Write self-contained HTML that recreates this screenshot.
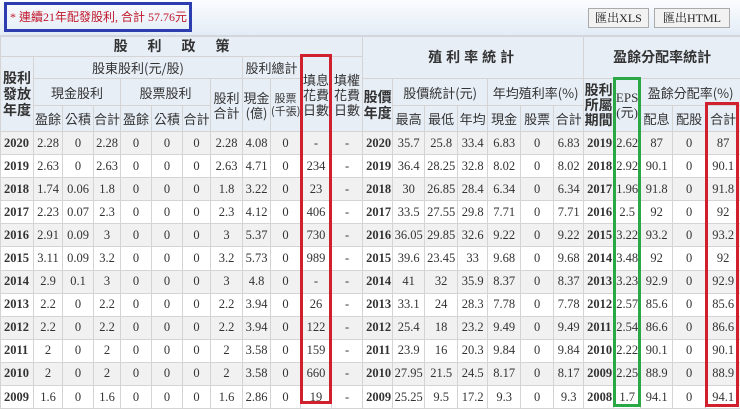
<!DOCTYPE html>
<html><head><meta charset="utf-8"><style>
*{margin:0;padding:0;box-sizing:border-box}
body{width:740px;height:408px;overflow:hidden;background:#fff;position:relative;font-family:"Liberation Serif","Noto Sans CJK TC",serif;color:#333}
.top{position:absolute;left:0;top:0;width:740px;height:36px;background:linear-gradient(#fbfdff,#e3ecf6);border-bottom:1px solid #cfd8e3}
.title{position:absolute;left:4px;top:2px;width:188px;height:30px;border:3px solid #2d3db0;color:#c0182b;font-size:12px;line-height:24px;padding-left:3px;font-family:"Liberation Serif","Noto Sans CJK TC",serif;white-space:nowrap;overflow:hidden}
.btn{position:absolute;top:8px;height:20px;background:#f2f2f2;border:1px solid #aaa;font-size:12px;line-height:18px;text-align:center;color:#222;font-family:"Liberation Serif","Noto Serif CJK SC",serif}
table{position:absolute;left:0;top:36px;width:740px;border-collapse:collapse;table-layout:fixed}
td,th{border:1px solid #d4d4d4;text-align:center;font-size:12.5px;padding:0;overflow:hidden;white-space:nowrap}
th{background:#e7eef6;font-weight:normal;font-family:"Noto Sans CJK TC",sans-serif;color:#333;font-size:13px;line-height:15px}
th.b{font-weight:bold;font-size:14px}
td.y{font-weight:bold;text-align:left;padding-left:3px}
tr.d{height:23.1px}
tr.d:nth-child(odd){background:#f1f1f1}
.box{position:absolute;border:3px solid}
</style></head><body>
<div class="top"></div>
<div class="title">* 連續21年配發股利, 合計 57.76元</div>
<div class="btn" style="left:588px;width:61px">匯出XLS</div>
<div class="btn" style="left:654px;width:76px">匯出HTML</div>
<table>
<colgroup>
<col style="width:33px"><col style="width:29px"><col style="width:31px"><col style="width:27px"><col style="width:31px"><col style="width:31px"><col style="width:28px"><col style="width:32px"><col style="width:28px"><col style="width:30px"><col style="width:31px"><col style="width:31px">
<col style="width:30px"><col style="width:32px"><col style="width:33px"><col style="width:30px"><col style="width:33px"><col style="width:33px"><col style="width:30px"><col style="width:30px"><col style="width:27px"><col style="width:32px"><col style="width:33px"><col style="width:35px">
</colgroup>
<tr style="height:20px"><th colspan="12" class="b" style="letter-spacing:20px">股利政策</th><th colspan="7" rowspan="2" class="b" style="letter-spacing:4px">殖利率統計</th><th colspan="5" rowspan="2" class="b">盈餘分配率統計</th></tr>
<tr style="height:22px"><th rowspan="3" class="b" style="line-height:16px">股利<br>發放<br>年度</th><th colspan="7">股東股利(元/股)</th><th colspan="2">股利總計</th><th rowspan="3">填息<br>花費<br>日數</th><th rowspan="3">填權<br>花費<br>日數</th></tr>
<tr style="height:27px"><th colspan="3">現金股利</th><th colspan="3">股票股利</th><th rowspan="2">股利<br>合計</th><th rowspan="2">現金<br>(億)</th><th rowspan="2" style="font-size:11px;line-height:13px">股票<br>(千張)</th>
<th rowspan="2" class="b" style="line-height:16px">股價<br>年度</th><th colspan="3">股價統計(元)</th><th colspan="3">年均殖利率(%)</th><th rowspan="2" class="b" style="line-height:15px">股利<br>所屬<br>期間</th><th rowspan="2" style="font-family:'Liberation Serif','Noto Sans CJK TC',serif">EPS<br>(元)</th><th colspan="3">盈餘分配率(%)</th></tr>
<tr style="height:26px"><th>盈餘</th><th>公積</th><th>合計</th><th>盈餘</th><th>公積</th><th>合計</th><th>最高</th><th>最低</th><th>年均</th><th>現金</th><th>股票</th><th>合計</th><th>配息</th><th>配股</th><th>合計</th></tr>
<tr class="d"><td class="y">2020</td><td>2.28</td><td>0</td><td>2.28</td><td>0</td><td>0</td><td>0</td><td>2.28</td><td>4.08</td><td>0</td><td>-</td><td>-</td><td class="y">2020</td><td>35.7</td><td>25.8</td><td>33.4</td><td>6.83</td><td>0</td><td>6.83</td><td class="y">2019</td><td>2.62</td><td>87</td><td>0</td><td>87</td></tr>
<tr class="d"><td class="y">2019</td><td>2.63</td><td>0</td><td>2.63</td><td>0</td><td>0</td><td>0</td><td>2.63</td><td>4.71</td><td>0</td><td>234</td><td>-</td><td class="y">2019</td><td>36.4</td><td>28.25</td><td>32.8</td><td>8.02</td><td>0</td><td>8.02</td><td class="y">2018</td><td>2.92</td><td>90.1</td><td>0</td><td>90.1</td></tr>
<tr class="d"><td class="y">2018</td><td>1.74</td><td>0.06</td><td>1.8</td><td>0</td><td>0</td><td>0</td><td>1.8</td><td>3.22</td><td>0</td><td>23</td><td>-</td><td class="y">2018</td><td>30</td><td>26.85</td><td>28.4</td><td>6.34</td><td>0</td><td>6.34</td><td class="y">2017</td><td>1.96</td><td>91.8</td><td>0</td><td>91.8</td></tr>
<tr class="d"><td class="y">2017</td><td>2.23</td><td>0.07</td><td>2.3</td><td>0</td><td>0</td><td>0</td><td>2.3</td><td>4.12</td><td>0</td><td>406</td><td>-</td><td class="y">2017</td><td>33.5</td><td>27.55</td><td>29.8</td><td>7.71</td><td>0</td><td>7.71</td><td class="y">2016</td><td>2.5</td><td>92</td><td>0</td><td>92</td></tr>
<tr class="d"><td class="y">2016</td><td>2.91</td><td>0.09</td><td>3</td><td>0</td><td>0</td><td>0</td><td>3</td><td>5.37</td><td>0</td><td>730</td><td>-</td><td class="y">2016</td><td>36.05</td><td>29.85</td><td>32.6</td><td>9.22</td><td>0</td><td>9.22</td><td class="y">2015</td><td>3.22</td><td>93.2</td><td>0</td><td>93.2</td></tr>
<tr class="d"><td class="y">2015</td><td>3.11</td><td>0.09</td><td>3.2</td><td>0</td><td>0</td><td>0</td><td>3.2</td><td>5.73</td><td>0</td><td>989</td><td>-</td><td class="y">2015</td><td>39.6</td><td>23.45</td><td>33</td><td>9.68</td><td>0</td><td>9.68</td><td class="y">2014</td><td>3.48</td><td>92</td><td>0</td><td>92</td></tr>
<tr class="d"><td class="y">2014</td><td>2.9</td><td>0.1</td><td>3</td><td>0</td><td>0</td><td>0</td><td>3</td><td>4.8</td><td>0</td><td>-</td><td>-</td><td class="y">2014</td><td>41</td><td>32</td><td>35.9</td><td>8.37</td><td>0</td><td>8.37</td><td class="y">2013</td><td>3.23</td><td>92.9</td><td>0</td><td>92.9</td></tr>
<tr class="d"><td class="y">2013</td><td>2.2</td><td>0</td><td>2.2</td><td>0</td><td>0</td><td>0</td><td>2.2</td><td>3.94</td><td>0</td><td>26</td><td>-</td><td class="y">2013</td><td>33.1</td><td>24</td><td>28.3</td><td>7.78</td><td>0</td><td>7.78</td><td class="y">2012</td><td>2.57</td><td>85.6</td><td>0</td><td>85.6</td></tr>
<tr class="d"><td class="y">2012</td><td>2.2</td><td>0</td><td>2.2</td><td>0</td><td>0</td><td>0</td><td>2.2</td><td>3.94</td><td>0</td><td>122</td><td>-</td><td class="y">2012</td><td>25.4</td><td>18</td><td>23.2</td><td>9.49</td><td>0</td><td>9.49</td><td class="y">2011</td><td>2.54</td><td>86.6</td><td>0</td><td>86.6</td></tr>
<tr class="d"><td class="y">2011</td><td>2</td><td>0</td><td>2</td><td>0</td><td>0</td><td>0</td><td>2</td><td>3.58</td><td>0</td><td>159</td><td>-</td><td class="y">2011</td><td>23.9</td><td>16</td><td>20.3</td><td>9.84</td><td>0</td><td>9.84</td><td class="y">2010</td><td>2.22</td><td>90.1</td><td>0</td><td>90.1</td></tr>
<tr class="d"><td class="y">2010</td><td>2</td><td>0</td><td>2</td><td>0</td><td>0</td><td>0</td><td>2</td><td>3.58</td><td>0</td><td>660</td><td>-</td><td class="y">2010</td><td>27.95</td><td>21.5</td><td>24.5</td><td>8.17</td><td>0</td><td>8.17</td><td class="y">2009</td><td>2.25</td><td>88.9</td><td>0</td><td>88.9</td></tr>
<tr class="d"><td class="y">2009</td><td>1.6</td><td>0</td><td>1.6</td><td>0</td><td>0</td><td>0</td><td>1.6</td><td>2.86</td><td>0</td><td>19</td><td>-</td><td class="y">2009</td><td>25.25</td><td>9.5</td><td>17.2</td><td>9.3</td><td>0</td><td>9.3</td><td class="y">2008</td><td>1.7</td><td>94.1</td><td>0</td><td>94.1</td></tr>
</table>
<div class="box" style="left:300px;top:54px;width:32px;height:350px;border-color:#d0202e"></div>
<div class="box" style="left:613px;top:77px;width:28px;height:330px;border-color:#2aa845"></div>
<div class="box" style="left:705px;top:102px;width:34px;height:305px;border-color:#d0202e"></div>
</body></html>
